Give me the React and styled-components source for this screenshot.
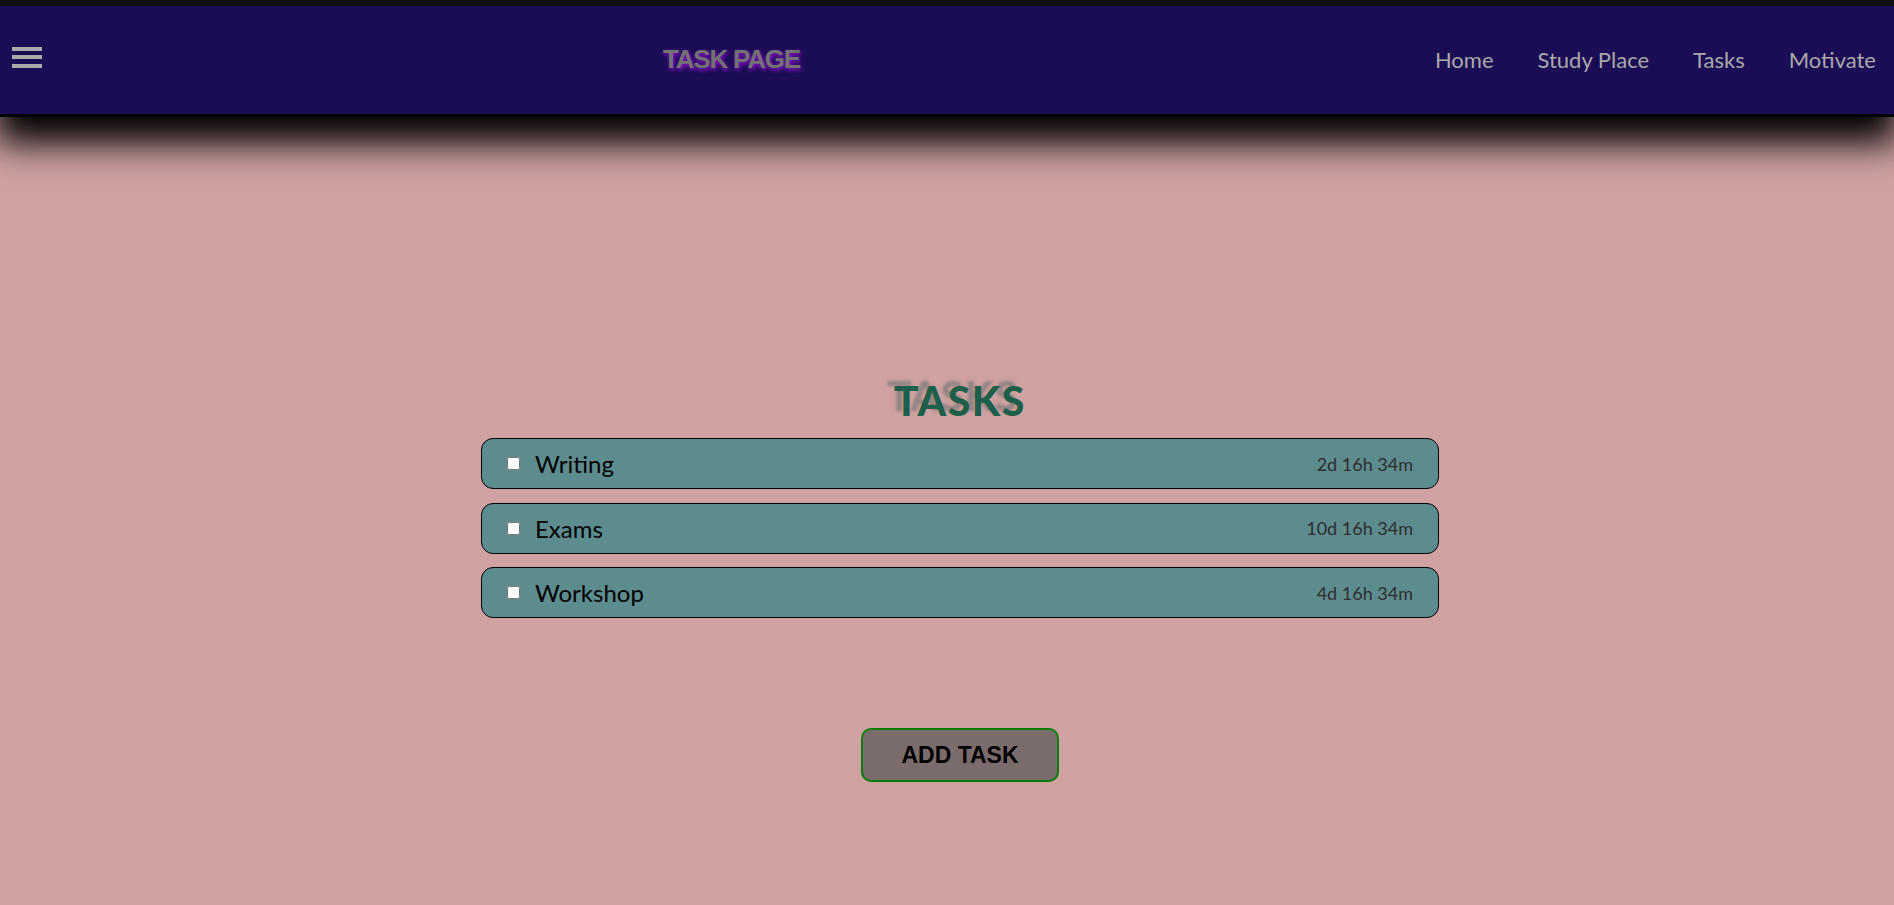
import React from 'react'
import styled, { createGlobalStyle } from 'styled-components'

const GlobalStyle = createGlobalStyle`
  html, body {
    margin: 0;
    padding: 0;
    background-color: #cfa1a1;
    font-family: Lato, "Noto Sans", sans-serif;
  }
  body {
    min-height: 905px;
  }
`

const StyledNav = styled.nav`
  position: relative;
  box-sizing: border-box;
  height: 117px;
  display: flex;
  align-items: center;
  justify-content: space-between;
  padding: 0 18px 0 12px;
  background-color: #1b0d55;
  border-top: 6px solid #101010;
  border-bottom: 3px solid #000;
  box-shadow: 0 22px 34px 4px #000;
`

const StyledBurger = styled.button`
  display: flex;
  flex-direction: column;
  gap: 4.5px;
  padding: 0;
  margin: 0 0 6px 0;
  background: none;
  border: none;
  cursor: pointer;
`

const StyledBar = styled.span`
  display: block;
  width: 30px;
  height: 4px;
  background-color: #aaaaaa;
`

const StyledBrand = styled.h1`
  margin: 0 14px 2px 0;
  font-family: "Liberation Sans", Arial, sans-serif;
  font-size: 26px;
  font-weight: bold;
  letter-spacing: -1.2px;
  color: #727272;
  text-shadow: 1px 2px 4px #9a10d8;
`

const StyledLinks = styled.ul`
  display: flex;
  gap: 44px;
  margin: 0 0 2px 0;
  padding: 0;
  list-style: none;
`

const StyledLink = styled.a`
  font-size: 22px;
  color: #a9a9a9;
  text-decoration: none;
`

const StyledMain = styled.main`
  display: flex;
  flex-direction: column;
  align-items: center;
  padding: 260px 0 0 26px;
`

const StyledHeading = styled.h2`
  margin: 0 0 13px 0;
  font-size: 41px;
  line-height: 48px;
  font-weight: 900;
  letter-spacing: 1.5px;
  color: #1e5f4b;
  text-shadow: -7px -5px 3px rgba(120, 120, 120, 0.7);
`

const StyledList = styled.ul`
  display: flex;
  flex-direction: column;
  gap: 13.5px;
  margin: 0;
  padding: 0;
  list-style: none;
`

const StyledTask = styled.li`
  box-sizing: border-box;
  width: 958px;
  height: 51px;
  display: flex;
  align-items: center;
  padding: 0 25px 0 22px;
  background-color: #5d8c8f;
  border: 1px solid #000;
  border-radius: 12px;
`

const StyledCheck = styled.input`
  width: 13px;
  height: 13px;
  margin: 0 15px 0 3px;
  accent-color: #ffffff;
`

const StyledName = styled.span`
  flex: 1;
  font-size: 24px;
  color: #000;
`

const StyledDue = styled.span`
  font-size: 18px;
  color: #2e2e2e;
`

const StyledAddButton = styled.button`
  box-sizing: border-box;
  width: 198px;
  height: 54px;
  margin-top: 110px;
  background-color: #7a6c6c;
  border: 2px solid #008000;
  border-radius: 10px;
  font-family: "Liberation Sans", Arial, sans-serif;
  font-size: 23px;
  font-weight: bold;
  color: #000;
  cursor: pointer;
`

const links = ['Home', 'Study Place', 'Tasks', 'Motivate']

const tasks = [
  { name: 'Writing', due: '2d 16h 34m' },
  { name: 'Exams', due: '10d 16h 34m' },
  { name: 'Workshop', due: '4d 16h 34m' }
]

const App = () => {
  return (
    <>
      <GlobalStyle />
      <StyledNav>
        <StyledBurger aria-label="menu">
          <StyledBar />
          <StyledBar />
          <StyledBar />
        </StyledBurger>
        <StyledBrand>TASK PAGE</StyledBrand>
        <StyledLinks>
          {links.map(link => (
            <li key={link}>
              <StyledLink href="#">{link}</StyledLink>
            </li>
          ))}
        </StyledLinks>
      </StyledNav>

      <StyledMain>
        <StyledHeading>TASKS</StyledHeading>
        <StyledList>
          {tasks.map(task => (
            <StyledTask key={task.name}>
              <StyledCheck type="checkbox" />
              <StyledName>{task.name}</StyledName>
              <StyledDue>{task.due}</StyledDue>
            </StyledTask>
          ))}
        </StyledList>
        <StyledAddButton>ADD TASK</StyledAddButton>
      </StyledMain>
    </>
  )
}

export default App
